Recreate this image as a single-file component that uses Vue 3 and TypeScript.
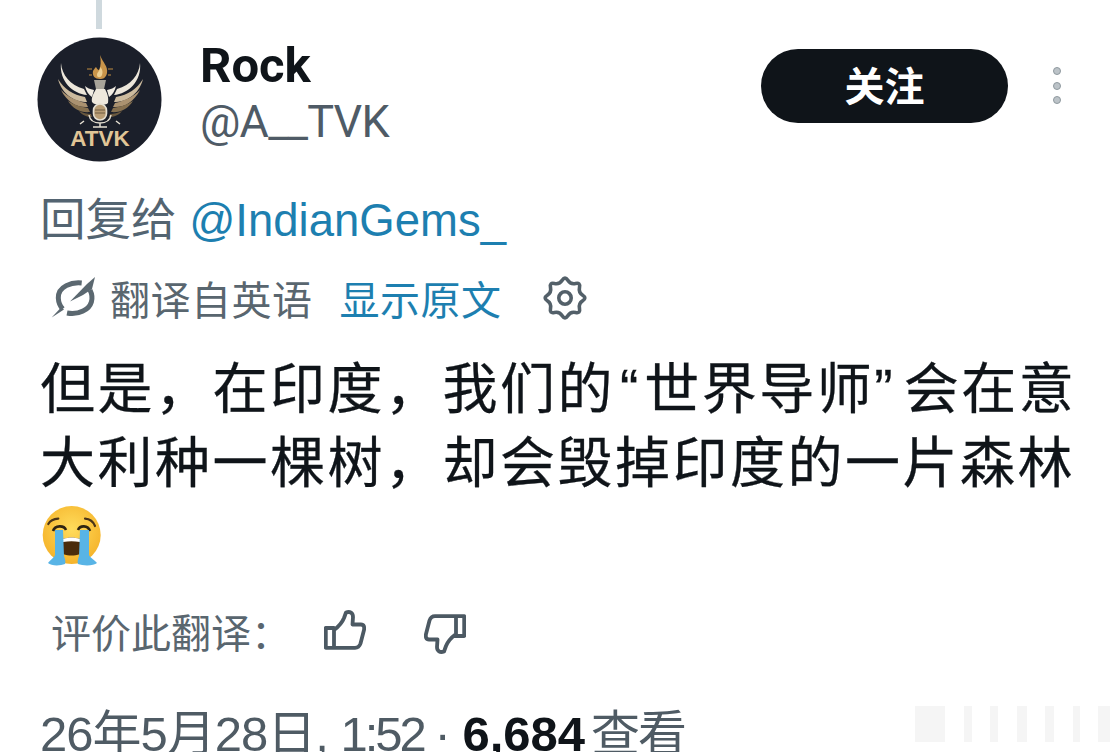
<template>
  <div class="page">
    <div class="thread-line"></div>

    <header class="head">
      <svg class="avatar" viewBox="0 0 125 125">
        <defs>
          <g id="wing">
            <path d="M24 26C25 38 33 48 47 52L50 58C36 57 22 44 24 26Z" fill="#ece6da" />
            <path d="M21 42C27 52 36 58 48 60L50 65C38 65 25 58 21 42Z" fill="#cdbb9e" />
            <path d="M24 53C31 60 40 64 49 66L51 70C40 71 30 65 24 53Z" fill="#ab9270" />
            <path d="M31 64C38 68 44 70 51 71L53 75C44 76 36 72 31 64Z" fill="#86704f" />
            <path d="M42 74C46 76 50 77 54 77L55 80C50 80 45 78 42 74Z" fill="#6a583e" />
            <path d="M48 49C50 51 53 52 57 53L55 60C52 58 49 54 48 49Z" fill="#f1ece2" />
          </g>
        </defs>
        <circle cx="62.5" cy="62.5" r="62" fill="#1b1f2a" />
        <use href="#wing" />
        <use href="#wing" transform="translate(127 0) scale(-1 1)" />
        <!-- 炬 -->
        <path d="M50 32H55M71 32H76M52 38H55M71 38H74" stroke="#8a6a3a" stroke-width="1.6" />
        <path d="M63 18C66 26 71 29 70 36C69 41 66 42 63 42C58 42 55 39 56 34C57 32 58 31 59 30C60 32 61 33 62 33C64 29 64 24 63 18Z" fill="#c8944a" />
        <path d="M63.5 30C65.5 33 66 35 65 38C64 41 60 41 60 38C60 35 63 34 63.5 30Z" fill="#eccf92" />
        <path d="M57 43H69L67 52H59Z" fill="#a8a49a" />
        <!-- 胴 -->
        <path d="M59 52H68C70 56 72 60 71 66C68 69 58 69 55 65C54 60 57 56 59 52Z" fill="#eee8dc" />
        <!-- マイク -->
        <rect x="56.5" y="67" width="13" height="16" rx="6.5" fill="#b89c74" stroke="#e6e0d2" stroke-width="1.6" />
        <path d="M58 73H68M58 76H68" stroke="#6f5c42" stroke-width="1.2" />
        <path d="M52 78C53 84 58 86 63 86C68 86 73 84 74 78M63 86V90M56 90H70" fill="none" stroke="#e6e0d2" stroke-width="1.5" />
        <path d="M47 84L43 87M79 84L83 87" stroke="#e6e0d2" stroke-width="1.5" />
        <text x="63" y="109" class="avatar-text">ATVK</text>
      </svg>
      <div class="names">
        <div class="name">Rock</div>
        <div class="handle">@A__TVK</div>
      </div>
      <button class="follow">关注</button>
      <div class="more">
        <span></span>
        <span></span>
        <span></span>
      </div>
    </header>

    <div class="reply">回复给 <span class="link">@IndianGems_</span></div>

    <div class="translate">
      <svg class="translate-icon" viewBox="0 0 48 48">
        <path d="M31.7 9C22 8 8 12 8.3 24C8.5 28 10 32 12.7 35" fill="none" stroke="#5b6870" stroke-width="5" />
        <path d="M40 16C44 24 42 33 33 37C28 39.5 22 40 17 39" fill="none" stroke="#5b6870" stroke-width="5" />
        <path d="M45 3L37 10L20 27.5L33 21L42 15Z" fill="#5b6870" />
        <path d="M1.7 43.5L11 33.5L14 35.5Z" fill="#5b6870" />
      </svg>
      <span class="grey">翻译自英语</span>
      <span class="blue">显示原文</span>
      <svg class="gear" viewBox="0 0 44 44">
        <path :d="gearPath" fill="none" stroke="#536069" stroke-width="3.6" stroke-linejoin="round" />
        <circle cx="22" cy="22" r="6.2" fill="none" stroke="#536069" stroke-width="3.6" />
      </svg>
    </div>

    <div class="body-text">
      <div class="tline">但是，在印度，我们的<span class="q open">“</span>世界导师<span class="q close">”</span>会在意</div>
      <div class="tline">大利种一棵树，却会毁掉印度的一片森林</div>
    </div>

    <svg class="emoji" viewBox="0 0 62 62">
      <defs>
        <radialGradient id="face" cx="50%" cy="40%" r="60%">
          <stop offset="0%" stop-color="#ffdc5c" />
          <stop offset="100%" stop-color="#f5b32a" />
        </radialGradient>
      </defs>
      <circle cx="30.7" cy="29" r="29" fill="url(#face)" />
      <path d="M7.3 18C9 15 13 13 17.3 12.7M54 20C52 15 48 13 44 12.7" fill="none" stroke="#4a3418" stroke-width="2.2" stroke-linecap="round" />
      <path d="M12 25C14 19 23 19 25 24M37 24C39 19 47 19 49 25" fill="none" stroke="#2e2412" stroke-width="2.6" />
      <path d="M22 33C28 31 33 31 39 33L39 48C33 50 28 50 22 48Z" fill="#4a2c0c" />
      <path d="M22 33C28 31 33 31 39 33L39 36C33 35 28 35 22 36Z" fill="#fff" />
      <path d="M14 24H22L23 50C24 53 25 56 24 58C19 60 10 60 7 57C9 54 13 52 14 49Z" fill="#58b4e6" />
      <path d="M39 24H48L48 49C49 52 54 54 56 57C53 60 42 60 37 58C36 56 37 53 38 50Z" fill="#58b4e6" />
    </svg>

    <div class="rate">
      <span class="rate-label">评价此翻译：</span>
      <svg class="thumb" viewBox="0 0 42 42">
        <path :d="thumbPath" fill="none" stroke="#4c5963" stroke-width="3.8" stroke-linejoin="round" />
      </svg>
      <svg class="thumb down" viewBox="0 0 42 42">
        <path :d="thumbPath" fill="none" stroke="#4c5963" stroke-width="3.8" stroke-linejoin="round" />
      </svg>
    </div>

    <div class="meta"><span class="date">26年5月28日, </span>1:52 · <b>6,684</b><span class="views">查看</span></div>

    <!-- 右下の透かし -->
    <div class="watermark">
      <span v-for="(w, i) in marks" :key="i" :style="{ width: w + 'px' }"></span>
    </div>
  </div>
</template>

<script setup lang="ts">
// 歯車の輪郭を計算する（8枚歯、頂点を丸める）
const buildGear = (teeth: number, outer: number, inner: number): string => {
  const total = teeth * 2;
  const pts: [number, number][] = [];
  for (let i = 0; i < total; i++) {
    const r = i % 2 === 0 ? outer : inner;
    const a = (Math.PI * 2 * i) / total - Math.PI / 2;
    pts.push([22 + r * Math.cos(a), 22 + r * Math.sin(a)]);
  }
  const mid = (i: number): string => {
    const p = pts[i % total];
    const q = pts[(i + 1) % total];
    return `${((p[0] + q[0]) / 2).toFixed(1)} ${((p[1] + q[1]) / 2).toFixed(1)}`;
  };
  let d = `M${mid(total - 1)}`;
  pts.forEach((p, i) => {
    d += `Q${p[0].toFixed(1)} ${p[1].toFixed(1)} ${mid(i)}`;
  });
  return d + 'Z';
};

const gearPath = buildGear(8, 22, 14.5);
const thumbPath =
  'M1.8 18H10V37.8H1.8Z M10 20C14 17 18 13 20 8L22 2.5C26 1 29 3 29 7L28.5 14.5H37C40 14.5 40.5 17 40 20L36.5 33.5C35.5 36.5 34 37.8 31 37.8H10';
const marks: number[] = [30, 8, 8, 10, 9, 7, 12];
</script>

<style>
body {
  background: #fff;
}
</style>

<style scoped>
.page {
  position: relative;
  width: 1120px;
  height: 752px;
  overflow: hidden;
  background: #fff;
  padding: 37px 0 0 40px;
  box-sizing: border-box;
  font-family: "Liberation Sans", "Noto Sans CJK SC", sans-serif;
  color: #0f1419;
}

.thread-line {
  position: absolute;
  left: 96px;
  top: 0;
  width: 6px;
  height: 29px;
  background: #cfd9de;
}

.head {
  display: flex;
  align-items: flex-start;
  height: 125px;
  margin-left: -3px;
}

.avatar {
  width: 125px;
  height: 125px;
  flex: none;
}

.avatar-text {
  font: 700 22.5px "Liberation Sans", sans-serif;
  fill: #e0c596;
  text-anchor: middle;
}

.names {
  margin-left: 38px;
  width: 561px;
  padding-top: 1px;
}

.name {
  font: 700 49px/56px Roboto, sans-serif;
  color: #0f1419;
}

.handle {
  font: 400 45px/56px Roboto, sans-serif;
  letter-spacing: -0.8px;
  color: #4f5b66;
}

.follow {
  width: 247px;
  height: 74px;
  margin-top: 12px;
  padding: 0 0 4px;
  border: none;
  border-radius: 37px;
  background: #0f1419;
  color: #fff;
  font: 700 40px "Noto Sans CJK SC", sans-serif;
  flex: none;
}

.more {
  display: flex;
  flex-direction: column;
  gap: 6.5px;
  margin: 30px 0 0 45px;
}

.more span {
  width: 8px;
  height: 8px;
  box-sizing: border-box;
  border-radius: 50%;
  background: #bcc3c8;
  border: 1.5px solid #8f999f;
}

.reply {
  margin-top: 27px;
  font: 400 45.5px/64px "Liberation Sans", "Noto Sans CJK SC", sans-serif;
  color: #536471;
}

.link {
  color: #1d7fb0;
}

.translate {
  display: flex;
  align-items: center;
  height: 60px;
  margin-top: 15px;
  margin-left: 10px;
  font: 400 40px "Noto Sans CJK SC", sans-serif;
}

.translate-icon {
  width: 48px;
  height: 48px;
  flex: none;
}

.grey {
  margin-left: 12px;
  color: #59666f;
  letter-spacing: 0.5px;
}

.blue {
  margin-left: 27px;
  color: #1d7fb0;
  letter-spacing: 0.5px;
}

.gear {
  width: 44px;
  height: 44px;
  margin-left: 41px;
  flex: none;
}

.body-text {
  margin-top: 19px;
  font: 400 55px/74px "Noto Sans CJK SC", sans-serif;
  -webkit-text-stroke: 0.3px #0f1419;
  color: #0f1419;
}

.tline {
  height: 74px;
  letter-spacing: 2.5px;
  white-space: nowrap;
}

.q {
  font-family: "Liberation Sans", sans-serif;
  line-height: 0;
}

.open {
  margin-left: 5px;
  letter-spacing: 6px;
}

.close {
  letter-spacing: 11px;
}

.emoji {
  display: block;
  width: 62px;
  height: 62px;
  margin: 11px 0 0 1px;
}

.rate {
  display: flex;
  align-items: center;
  height: 50px;
  margin-top: 38px;
  margin-left: 11px;
}

.rate-label {
  width: 273px;
  font: 400 40px "Noto Sans CJK SC", sans-serif;
  color: #59666f;
}

.thumb {
  width: 42px;
  height: 42px;
  flex: none;
}

.down {
  margin-top: 4px;
  margin-left: 58px;
  transform: rotate(180deg);
}

.meta {
  margin-top: 48px;
  font: 400 49px/60px "Liberation Sans", "Noto Sans CJK SC", sans-serif;
  letter-spacing: -3px;
  color: #4f5b64;
  white-space: nowrap;
}

.date {
  letter-spacing: -1px;
}

.meta b {
  margin-left: 4px;
  letter-spacing: 0;
  color: #0f1419;
}

.views {
  margin-left: 6px;
  letter-spacing: -2px;
}

.watermark {
  position: absolute;
  right: 10px;
  top: 706px;
  display: flex;
  gap: 18.5px;
  opacity: 0.05;
}

.watermark span {
  height: 36px;
  background: #555;
}
</style>
